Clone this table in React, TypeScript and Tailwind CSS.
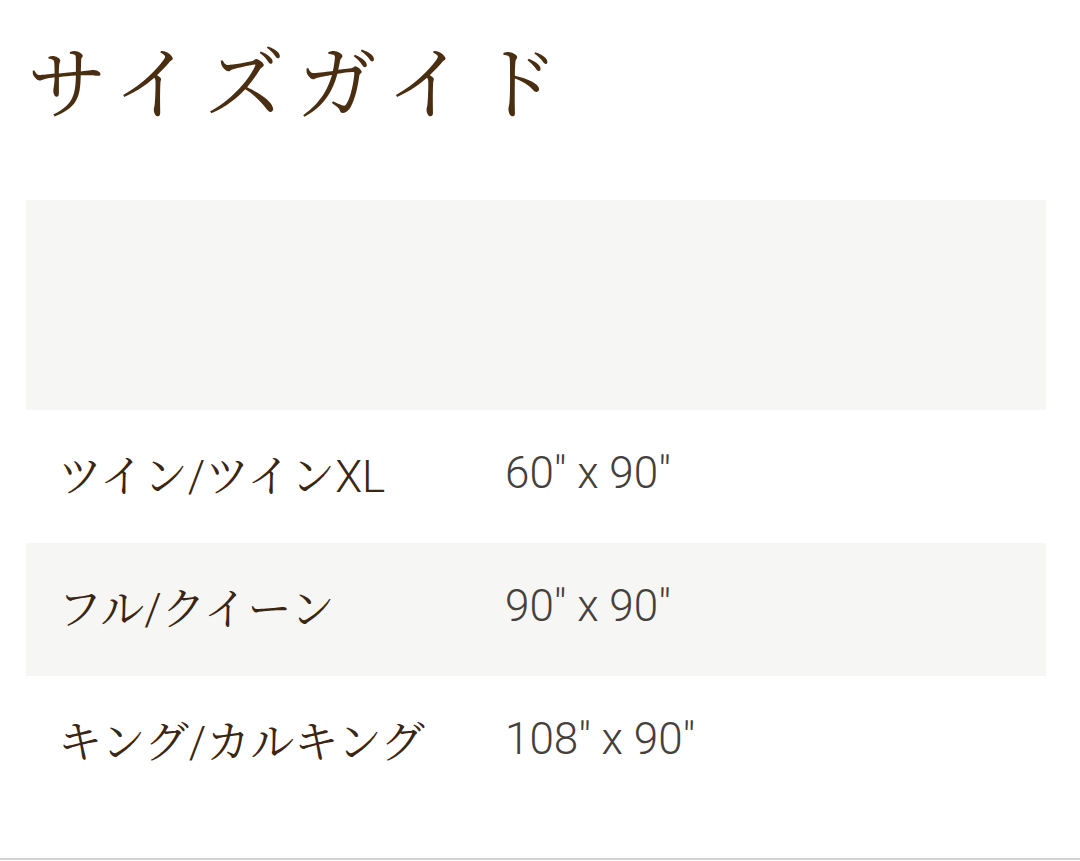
import React from "react";

const rows = [
  { name: "ツイン/ツインXL", size: "60\" x 90\"", shaded: false },
  { name: "フル/クイーン", size: "90\" x 90\"", shaded: true },
  { name: "キング/カルキング", size: "108\" x 90\"", shaded: false },
];

const title = { fontFamily: '"Noto Serif CJK JP", "Noto Sans CJK JP", serif' };
const jp = { fontFamily: '"Noto Serif CJK JP", "Noto Sans CJK JP", serif' };
const lat = { fontFamily: 'Roboto, "Liberation Sans", sans-serif' };

function Name({ text }: { text: string }) {
  const parts = text.match(/[\x00-\x7f]+|[^\x00-\x7f]+/g) || [];
  return (
    <>
      {parts.map((p, i) =>
        /^[\x00-\x7f]+$/.test(p) ? (
          <span key={i} className="font-light" style={lat}>
            {p}
          </span>
        ) : (
          <span key={i} className="font-normal" style={jp}>
            {p}
          </span>
        )
      )}
    </>
  );
}

export default function App() {
  return (
    <div className="w-[1080px] h-[861px] bg-white flex flex-col overflow-hidden">
      <div className="h-[200px] pl-[27px] pt-[34px]">
        <h1
          className="text-[80px] leading-[88px] tracking-[0.15em] text-[#4a2e12] font-normal"
          style={title}
        >
          サイズガイド
        </h1>
      </div>
      <div className="ml-[26px] mr-[34px] flex flex-col">
        <div className="h-[210px] bg-[#f6f6f4]" />
        {rows.map((r) => (
          <div
            key={r.name}
            className={`h-[133px] flex items-center pl-[32px] ${r.shaded ? "bg-[#f6f6f4]" : "bg-white"}`}
          >
            <div className="w-[447px] text-[44px] text-[#3a2612] -mt-[4px] whitespace-nowrap">
              <Name text={r.name} />
            </div>
            <div className="text-[44px] font-light text-[#45403c] -mt-[8px]" style={lat}>
              {r.size}
            </div>
          </div>
        ))}
      </div>
      <div className="flex-1" />
      <div className="h-[2px] bg-[#d2d2d2] mb-[1px]" />
    </div>
  );
}
